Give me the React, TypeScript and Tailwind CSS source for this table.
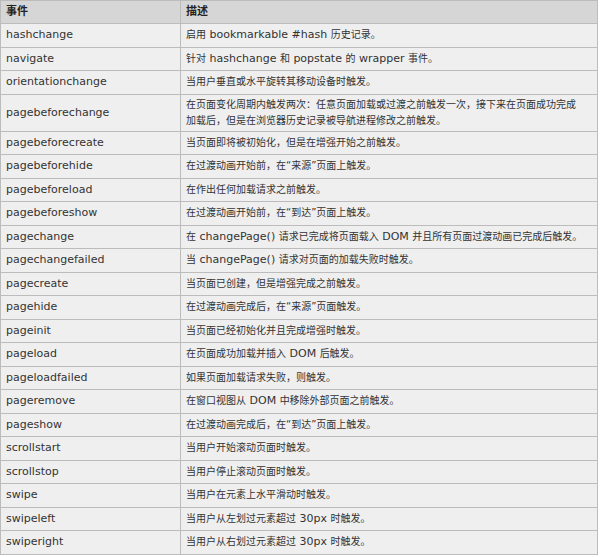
import React from "react";

const rows: [string, string][] = [
  ["hashchange", "启用 bookmarkable #hash 历史记录。"],
  ["navigate", "针对 hashchange 和 popstate 的 wrapper 事件。"],
  ["orientationchange", "当用户垂直或水平旋转其移动设备时触发。"],
  [
    "pagebeforechange",
    "在页面变化周期内触发两次：任意页面加载或过渡之前触发一次，接下来在页面成功完成加载后，但是在浏览器历史记录被导航进程修改之前触发。",
  ],
  ["pagebeforecreate", "当页面即将被初始化，但是在增强开始之前触发。"],
  ["pagebeforehide", "在过渡动画开始前，在“来源”页面上触发。"],
  ["pagebeforeload", "在作出任何加载请求之前触发。"],
  ["pagebeforeshow", "在过渡动画开始前，在“到达”页面上触发。"],
  ["pagechange", "在 changePage() 请求已完成将页面载入 DOM 并且所有页面过渡动画已完成后触发。"],
  ["pagechangefailed", "当 changePage() 请求对页面的加载失败时触发。"],
  ["pagecreate", "当页面已创建，但是增强完成之前触发。"],
  ["pagehide", "在过渡动画完成后，在“来源”页面触发。"],
  ["pageinit", "当页面已经初始化并且完成增强时触发。"],
  ["pageload", "在页面成功加载并插入 DOM 后触发。"],
  ["pageloadfailed", "如果页面加载请求失败，则触发。"],
  ["pageremove", "在窗口视图从 DOM 中移除外部页面之前触发。"],
  ["pageshow", "在过渡动画完成后，在“到达”页面上触发。"],
  ["scrollstart", "当用户开始滚动页面时触发。"],
  ["scrollstop", "当用户停止滚动页面时触发。"],
  ["swipe", "当用户在元素上水平滑动时触发。"],
  ["swipeleft", "当用户从左划过元素超过 30px 时触发。"],
  ["swiperight", "当用户从右划过元素超过 30px 时触发。"],
];

const font = "font-['DejaVu_Sans','Noto_Sans_CJK_SC',sans-serif]";

// Chinese glyphs in the shot are a little smaller than the Latin ones
function Mixed({ text }: { text: string }) {
  const parts = text.split(/([\u3000-\u303f\u4e00-\u9fff\uff00-\uffef\u201c\u201d]+)/);
  return (
    <>
      {parts.map((p, i) =>
        i % 2 === 1 ? (
          <span key={i} className="text-[10px]">
            {p}
          </span>
        ) : (
          <React.Fragment key={i}>{p}</React.Fragment>
        )
      )}
    </>
  );
}

export default function App() {
  return (
    <div className={`w-[600px] h-[557px] bg-white overflow-hidden ${font}`}>
      <table className="w-[598px] border-collapse text-[11px] text-[#333] table-fixed">
        <colgroup>
          <col className="w-[180px]" />
          <col />
        </colgroup>
        <thead>
          <tr className="h-[23px] bg-[#d6d6d6]">
            <th className="border border-[#bcbcbc] px-[5px] py-0 text-left font-bold text-[11px] text-[#222]">
              事件
            </th>
            <th className="border border-[#bcbcbc] px-[5px] py-0 text-left font-bold text-[11px] text-[#222]">
              描述
            </th>
          </tr>
        </thead>
        <tbody>
          {rows.map(([name, desc]) => {
            const long = name === "pagebeforechange";
            return (
              <tr key={name} className="h-[23.5px] bg-[#efefef]">
                <td className="border border-[#bcbcbc] px-[5px] py-0 align-middle leading-[16px]">
                  {name}
                </td>
                <td
                  className={
                    long
                      ? "border border-[#bcbcbc] pl-[5px] pr-[16px] py-[2px] align-middle leading-[16px]"
                      : "border border-[#bcbcbc] pl-[5px] pr-[4px] py-0 align-middle leading-[16px] whitespace-nowrap"
                  }
                >
                  <Mixed text={desc} />
                </td>
              </tr>
            );
          })}
        </tbody>
      </table>
    </div>
  );
}
